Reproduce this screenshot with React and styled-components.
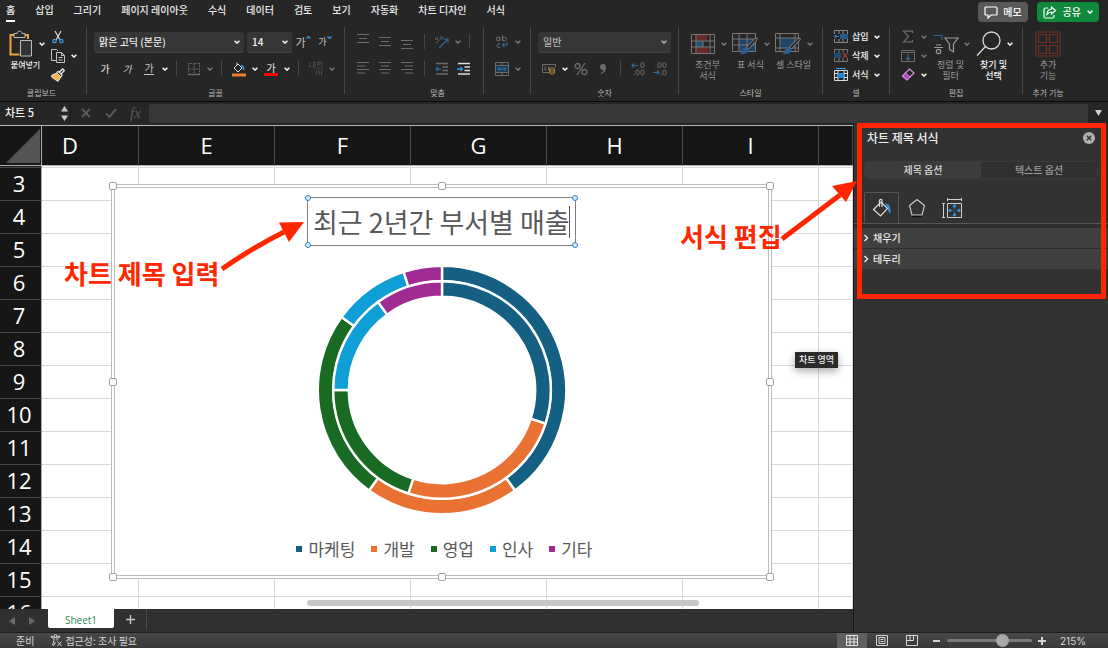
import React from 'react';
import styled, { createGlobalStyle } from 'styled-components';

const GlobalStyle = createGlobalStyle`
    * {
        box-sizing: border-box;
    }
    body {
        margin: 0;
        background: #262626;
        color: #e6e6e6;
        font-family: "Noto Sans CJK KR", "Noto Sans", sans-serif;
        font-size: 10px;
        line-height: 16px;
    }
    button, input, select {
        margin: 0;
        padding: 0;
        border: 0;
        background: none;
        color: inherit;
        font: inherit;
    }
    svg {
        display: block;
        flex: none;
    }
`;

const Page = styled.div`
    display: flex;
    flex-direction: column;
    height: 100vh;
    overflow: hidden;
`;

/* ---------- top tabs ---------- */

const TabBar = styled.header`
    display: flex;
    align-items: flex-start;
    justify-content: space-between;
    height: 27px;
    padding: 2px 9px 0 6px;
`;

const Tabs = styled.nav`
    display: flex;
    gap: 20px;
`;

const Tab = styled.a`
    height: 20px;
    color: #ececec;
    font-weight: 500;
    text-decoration: none;
    white-space: nowrap;
    border-bottom: 2px solid ${props => (props.$active ? '#fff' : 'transparent')};
`;

const TopActions = styled.div`
    display: flex;
    gap: 9px;
`;

const TopButton = styled.button`
    display: flex;
    align-items: center;
    gap: ${props => (props.$green ? 6 : 5)}px;
    height: 20px;
    padding: 0 6px;
    border-radius: 4px;
    color: #fff;
    font-weight: 500;
    background: ${props => (props.$green ? '#0f8a3c' : '#595959')};
`;

/* ---------- ribbon ---------- */

const RibbonBar = styled.div`
    display: flex;
    height: 75px;
    border-bottom: 1px solid #0c0c0c;
`;

const Divider = styled.div`
    flex: none;
    width: 1px;
    height: 67px;
    background: #474747;
`;

const Group = styled.section`
    display: flex;
    flex-direction: column;
    flex: none;
    padding: 0 7px;
    &:first-child {
        padding-left: 4px;
    }
`;

const GroupBody = styled.div`
    display: flex;
    align-items: flex-start;
    gap: ${props => props.$gap || 0}px;
    height: 58px;
`;

const GroupName = styled.div`
    color: #b8b8b8;
    font-size: 8px;
    text-align: center;
    white-space: nowrap;
`;

const Rows = styled.div`
    display: flex;
    flex-direction: column;
    padding-top: ${props => (props.$three ? 0 : 1)}px;
`;

const Row = styled.div`
    display: flex;
    align-items: center;
    height: ${props => (props.$low ? 19 : 27)}px;
`;

const SmallLine = styled.span`
    width: 1px;
    height: 15px;
    margin: 0 6px;
    background: #474747;
`;

const ToolButton = styled.button`
    display: flex;
    align-items: center;
    justify-content: center;
    width: 22px;
    height: 20px;
    color: ${props => (props.$dim ? '#6c6c6c' : '#c8c8c8')};
`;

const ArrowButton = styled.button`
    display: flex;
    align-items: center;
    justify-content: center;
    width: 10px;
    height: 20px;
    color: ${props => (props.$dim ? '#777' : '#f4f4f4')};
`;

const Glyph = styled.span`
    font-size: 10px;
    font-style: ${props => (props.$italic ? 'italic' : 'normal')};
    font-weight: ${props => (props.$strong ? 500 : 400)};
    line-height: 12px;
    border-bottom: ${props => (props.$under ? '1px solid currentColor' : '0')};
`;

const FontColor = styled.span`
    width: 14px;
    border-bottom: 3px solid #fe0000;
    font-weight: 500;
    line-height: 11px;
    text-align: center;
`;

const SizeGlyph = styled.span`
    display: flex;
    align-items: flex-start;
    font-size: ${props => (props.$big ? 11 : 9)}px;
    line-height: 14px;
`;

const Phonetic = styled.span`
    display: flex;
    flex-direction: column;
    align-items: flex-end;
    color: #555;
    font-size: 8px;
    line-height: 8px;
    white-space: nowrap;
`;

const LabelButton = styled.button`
    display: flex;
    align-items: center;
    width: 52px;
    height: 19px;
    color: #f0f0f0;
    font-size: 9px;
    font-weight: 500;
`;

const LabelIcon = styled.span`
    display: flex;
    justify-content: center;
    width: 22px;
`;

const LabelText = styled.span`
    width: 20px;
    text-align: left;
`;

const BigButton = styled.button`
    display: flex;
    flex-direction: column;
    align-items: center;
    gap: 2px;
    width: ${props => (props.$plain ? 36 : 43)}px;
    padding-top: 4px;
    color: ${props => (props.$dim ? '#9a9a9a' : '#f2f2f2')};
    font-size: ${props => (props.$small ? 8 : 9)}px;
    font-weight: ${props => (props.$dim ? 400 : 500)};
    line-height: 11px;
    white-space: nowrap;
`;

const BigIcon = styled.span`
    display: flex;
    align-items: center;
    height: 26px;
`;

const BigPicture = styled.span`
    display: flex;
    justify-content: center;
    width: 32px;
`;

const BigArrow = styled.span`
    display: flex;
    justify-content: center;
    width: 10px;
    color: ${props => (props.$dim ? '#777' : '#f4f4f4')};
`;

const BigLine = styled.span`
    display: block;
    height: 11px;
`;

const SelectBox = styled.label`
    position: relative;
    display: flex;
    width: ${props => props.$width};
    height: 20px;
    margin-right: ${props => props.$gap || 0}px;
    border-radius: 3px;
    background: #363636;
    box-shadow: 0 1px 0 #444;
    color: ${props => (props.$dim ? '#b4b4b4' : '#f0f0f0')};
    svg {
        position: absolute;
        right: 4px;
        top: 8px;
    }
`;

const Select = styled.select`
    width: 100%;
    padding: 0 14px 0 5px;
    appearance: none;
    outline: 0;
    font-weight: 500;
`;

/* ---------- formula bar ---------- */

const FormulaBar = styled.div`
    display: flex;
    align-items: center;
    height: 23px;
    padding-bottom: 1px;
    background: #262626;
`;

const NameBox = styled.input`
    width: 58px;
    padding: 0 0 2px 5px;
    outline: 0;
    color: #f0f0f0;
    font-size: 11px;
    font-weight: 500;
`;

const Stepper = styled.button`
    display: flex;
    justify-content: center;
    width: 12px;
`;

const FormulaTools = styled.div`
    display: flex;
    padding: 0 1px 0 2px;
    border-left: 1px solid #1a1a1a;
`;

const FormulaTool = styled.button`
    display: flex;
    align-items: center;
    justify-content: center;
    width: 25px;
    height: 18px;
    color: #5c5c5c;
    font-family: "Liberation Serif", serif;
    font-size: 15px;
    font-style: italic;
`;

const FormulaInput = styled.input`
    flex: 1;
    min-width: 0;
    height: 19px;
    background: #383838;
    border-radius: 3px 0 0 3px;
    outline: 0;
`;

const FormulaMore = styled.button`
    display: flex;
    justify-content: center;
    width: 20px;
`;

/* ---------- workspace ---------- */

const Workspace = styled.div`
    position: relative;
    display: flex;
    flex: 1;
    min-height: 0;
`;

const SheetColumn = styled.main`
    display: flex;
    flex: 1;
    flex-direction: column;
    min-width: 0;
`;

const Canvas = styled.div`
    position: relative;
    flex: 1;
    min-height: 0;
    overflow: hidden;
    border-top: 1px solid #b8b8b8;
    background: #fff;
`;

const Grid = styled.table`
    width: 100%;
    border-spacing: 0;
    table-layout: fixed;
    color: #fff;
    font-family: "Open Sans", "Noto Sans", sans-serif;
    font-size: 22px;
    line-height: 30px;
`;

const Corner = styled.th`
    width: 42px;
    height: 40px;
    padding: 0;
    border-right: 1px solid #b0b0b0;
    border-bottom: 1px solid #b0b0b0;
    background: #161616;
    svg {
        margin-left: 6px;
    }
`;

const ColumnHead = styled.th`
    width: ${props => props.$width || 'auto'};
    padding: 0 ${props => props.$cut || 0}px 2px 0;
    border-right: 1px solid #4a4a4a;
    border-bottom: 1px solid #b0b0b0;
    background: #161616;
    font-weight: 400;
`;

const RowHead = styled.th`
    height: ${props => (props.$sliver ? 2 : 33)}px;
    padding: 0 3px ${props => (props.$sliver ? 0 : 2)}px 0;
    border-right: 1px solid #b0b0b0;
    border-bottom: 1px solid #4a4a4a;
    background: #161616;
    font-weight: 400;
`;

const Cell = styled.td`
    padding: 0;
    border-right: 1px solid #d9d9d9;
    border-bottom: 1px solid #d9d9d9;
`;

const ScrollThumb = styled.div`
    position: absolute;
    left: 36%;
    bottom: 3px;
    width: 46%;
    height: 6px;
    border-radius: 3px;
    background: #c6c6c6;
`;

/* ---------- chart ---------- */

const ChartFrame = styled.section`
    position: absolute;
    left: 111px;
    top: 58px;
    display: flex;
    flex-direction: column;
    align-items: center;
    width: 661px;
    height: 395px;
    padding-top: 9px;
    border: 4px double #bcbcbc;
    background: #fff;
`;

const HandleLayer = styled.div`
    position: absolute;
    inset: -2px;
`;

const Handle = styled.span`
    position: absolute;
    left: ${props => props.$x};
    top: ${props => props.$y};
    width: 8px;
    height: 8px;
    margin: -4px;
    border: 1px solid #a0a0a0;
    border-radius: 2px;
    background: #fff;
`;

const TitleBox = styled.div`
    position: relative;
    display: flex;
    align-items: center;
    width: 269px;
    height: 49px;
    padding: 0 5px;
    border: 1px solid #808080;
`;

const TitleInput = styled.input`
    flex: 1;
    min-width: 0;
    outline: 0;
    color: #595959;
    font-size: 27px;
    line-height: 36px;
    text-align: center;
`;

const Caret = styled.span`
    width: 1px;
    height: 32px;
    background: #555;
`;

const TitleHandle = styled.span`
    position: absolute;
    left: ${props => props.$x};
    top: ${props => props.$y};
    width: 6px;
    height: 6px;
    margin: -3px;
    border: 1px solid #2f86d3;
    border-radius: 50%;
    background: #d6e9fa;
`;

const Donut = styled.svg`
    margin-top: 19px;
`;

const Legend = styled.ul`
    display: flex;
    gap: 16px;
    margin: 22px 0 0;
    padding: 0 0 0 6px;
    list-style: none;
    color: #595959;
    font-size: 17px;
    line-height: 24px;
`;

const LegendItem = styled.li`
    display: flex;
    align-items: center;
    gap: 6px;
    &::before {
        content: '';
        width: 6px;
        height: 6px;
        background: ${props => props.$color};
    }
`;

const Tooltip = styled.div`
    position: absolute;
    left: 795px;
    top: 226px;
    padding: 0 4px;
    background: #2b2b2b;
    box-shadow: 0 3px 8px rgba(0, 0, 0, 0.35);
    color: #f2f2f2;
    font-size: 9px;
    font-weight: 500;
`;

/* ---------- sheet tabs ---------- */

const SheetBar = styled.div`
    display: flex;
    align-items: flex-start;
    height: 23px;
    background: #303030;
`;

const SheetArrow = styled.button`
    display: flex;
    align-items: center;
    justify-content: center;
    width: 20px;
    height: 23px;
`;

const SheetArrows = styled.div`
    display: flex;
    width: 48px;
    padding-left: 2px;
`;

const SheetTab = styled.button`
    width: 66px;
    height: 19px;
    padding-top: 2px;
    border-radius: 0 0 2px 2px;
    background: #fff;
    color: #2e8b57;
    font-family: "Open Sans", sans-serif;
`;

const AddSheet = styled.button`
    display: flex;
    align-items: center;
    justify-content: center;
    width: 33px;
    height: 21px;
    border-right: 1px solid #4c4c4c;
`;

/* ---------- side panel ---------- */

const Panel = styled.aside`
    position: relative;
    flex: none;
    width: 255px;
    border-left: 1px solid #161616;
    background: #323232;
`;

const PanelHead = styled.div`
    display: flex;
    align-items: center;
    justify-content: space-between;
    height: 25px;
    padding: 0 13px;
`;

const PanelTitle = styled.h2`
    margin: 0;
    color: #efefef;
    font-size: 12px;
    font-weight: 500;
    line-height: 18px;
`;

const Segments = styled.div`
    display: flex;
    margin: 11px 10px 13px;
    border: 1px solid #3a3a3a;
    border-radius: 4px;
`;

const Segment = styled.button`
    flex: 1;
    height: 16px;
    background: ${props => (props.$active ? '#3c3c3c' : '#303030')};
    color: ${props => (props.$active ? '#dcdcdc' : '#9c9c9c')};
    font-weight: 500;
`;

const IconTabs = styled.div`
    display: flex;
    padding-left: 10px;
    border-bottom: 1px solid #565656;
`;

const IconTab = styled.button`
    display: flex;
    align-items: center;
    justify-content: center;
    width: 35px;
    height: 31px;
    border: 1px solid ${props => (props.$active ? '#565656' : 'transparent')};
    border-bottom: 0;
    border-radius: 2px 2px 0 0;
`;

const Sections = styled.div`
    display: grid;
    gap: 1px;
    padding-top: 4px;
    background: #2e2e2e;
`;

const SectionButton = styled.button`
    display: flex;
    align-items: center;
    gap: 3px;
    height: 20px;
    padding-left: 8px;
    background: #404040;
    color: #ececec;
    font-weight: 500;
`;

/* ---------- annotations ---------- */

const RedFrame = styled.div`
    position: absolute;
    left: 3px;
    right: 2px;
    top: -2px;
    height: 176px;
    border: 5px solid #ff2600;
`;

const Arrow = styled.svg`
    position: absolute;
    left: ${props => props.$left}px;
    top: ${props => props.$top}px;
`;

const Note = styled.p`
    position: absolute;
    left: ${props => props.$left}px;
    top: ${props => props.$top}px;
    margin: 0;
    color: #ff2600;
    font-size: 26px;
    font-weight: 700;
    line-height: 32px;
    white-space: nowrap;
`;

/* ---------- status bar ---------- */

const StatusBar = styled.footer`
    display: flex;
    align-items: center;
    flex: none;
    height: 16px;
    background: linear-gradient(#484848, #383838);
    border-top: 1px solid #1e1e1e;
    color: #d4d4d4;
`;

const StatusText = styled.span`
    display: flex;
    align-items: center;
    gap: 2px;
    padding-left: 16px;
`;

const Spacer = styled.span`
    flex: 1;
`;

const ViewButton = styled.button`
    display: flex;
    align-items: center;
    justify-content: center;
    width: 30px;
    height: 16px;
    background: ${props => (props.$active ? '#606060' : 'none')};
`;

const ZoomButton = styled.button`
    display: flex;
    justify-content: center;
    width: 20px;
`;

const ZoomSlider = styled.input`
    width: 85px;
    height: 14px;
    appearance: none;
    &::-webkit-slider-runnable-track {
        height: 3px;
        border-radius: 2px;
        background: #7a7a7a;
    }
    &::-webkit-slider-thumb {
        appearance: none;
        width: 13px;
        height: 13px;
        margin-top: -5px;
        border-radius: 50%;
        background: #a8a8a8;
    }
`;

const ZoomValue = styled.span`
    width: 56px;
    padding-left: 8px;
    font-family: Inter, sans-serif;
`;

/* ---------- icons ---------- */

const Svg = ({ w, h, children, ...rest }) => (
    <svg width={w} height={h} viewBox={`0 0 ${w} ${h}`} fill="none" stroke="currentColor" strokeWidth="1" aria-hidden="true" {...rest}>
        {children}
    </svg>
);

const Chevron = () => (
    <Svg w={6} h={4} strokeWidth="1.5"><path d="M.6.7 3 3.1 5.4.7" /></Svg>
);

const PasteIcon = () => (
    <Svg w={26} h={28}>
        <path d="M6 5H2.500v19.500h9M17 5h3v4" stroke="#f2a33a" strokeWidth="2" />
        <path d="M6 7.500v-4h3c0-3 5-3 5 0h3v4z" stroke="#bdbdbd" fill="#262626" />
        <path d="M12.500 10.500h11V26h-11z" stroke="#bdbdbd" fill="#333" />
    </Svg>
);

const CutIcon = () => (
    <Svg w={14} h={14}>
        <path d="M4 1l5 9M10 1 5 10" stroke="#dedede" strokeWidth="1.2" />
        <circle cx="3.600" cy="11" r="1.700" stroke="#3a9ce8" strokeWidth="1.200" />
        <circle cx="10.400" cy="11" r="1.700" stroke="#3a9ce8" strokeWidth="1.200" />
    </Svg>
);

const CopyIcon = () => (
    <Svg w={16} h={16} stroke="#c4c4c4">
        <path d="M6 12.500H1.500v-11h5L8 3" />
        <path d="M6.500 4.500h5l3 3v7h-8zM11.500 4.500v3h3M8.500 9.500h4M8.500 12h4" />
    </Svg>
);

const BrushIcon = () => (
    <Svg w={16} h={14}>
        <path d="M2 7l5-2 4 4-3 4.500L1.500 9z" fill="#f3b44a" stroke="#e9e2d2" />
        <path d="M6.500 4.500l2-1L12 7l-1.200 2M9.500 4l3-3 1.800 1.600-3 3.200" stroke="#eee" strokeWidth="1.300" />
    </Svg>
);

const BorderIcon = () => (
    <Svg w={14} h={14}>
        <path d="M1 1.500h12M1.500 1v11M12.500 1v11M7 2v10M2 7h10" strokeDasharray="1.500 1" />
        <path d="M1 12.500h12" strokeWidth="1.400" />
    </Svg>
);

const FillIcon = () => (
    <Svg w={16} h={16}>
        <path d="M3 7l4-4 4 4-4 4zM6 4V1.500" stroke="#d8d8d8" />
        <path d="M10 4.500c2 0 3 2 2.500 4.500" stroke="#3a9ce8" strokeWidth="1.600" />
        <path d="M1 14h14" stroke="#ed7d31" strokeWidth="3" />
    </Svg>
);

const PhoneticIcon = () => (
    <Svg w={8} h={7} stroke="#33536e"><path d="M1.500 1c0 3 0 4-1 5M4 1v5M6.500 1v5" /></Svg>
);

const lineSets = {
    left: 'M1 1.500h12M1 5h8M1 8.500h12M1 12h8',
    center: 'M1 1.500h12M3 5h8M1 8.500h12M3 12h8',
    right: 'M1 1.500h12M5 5h8M1 8.500h12M5 12h8',
    vtop: 'M1 .5h12M3 4.500h8M1 8.500h12',
    vmid: 'M1 3.500h12M3 7.500h8M1 11.500h12',
    vbot: 'M1 6.500h12M3 10.500h8M1 14.500h12',
};

const Lines = ({ kind }) => (
    <Svg w={14} h={15} strokeWidth="1.200"><path d={lineSets[kind]} /></Svg>
);

const OrientIcon = () => (
    <Svg w={16} h={14}>
        <path d="M1 5l3-3M1.500 2.500l3 3M5 5.500l3-3M6.500 1l3 3M2 8l2.500-2" />
        <path d="M5 13l8.500-8.500M9.500 4h4.500v4.500" stroke="#2f6896" strokeWidth="1.200" />
    </Svg>
);

const IndentIcon = ({ out, bright }) => (
    <Svg w={14} h={14} strokeWidth="1.300">
        <path d="M1 1.500h12M7.500 5h5.500M7.500 8.500h5.500M1 12h12" stroke={bright ? '#dcdcdc' : 'currentColor'} />
        <path d={out ? 'M1 7h5M3 5 1 7l2 2' : 'M0 7h5.500M3.500 5l2 2-2 2'} stroke={bright ? '#2f9bec' : '#2f6896'} />
    </Svg>
);

const WrapIcon = () => (
    <Svg w={14} h={14}>
        <circle cx="3" cy="4" r="1.800" /><path d="M4.800 2v4M7.500 0v6" /><circle cx="9.500" cy="4" r="1.800" />
        <path d="M5 9a2 2 0 1 0 0 3.500" />
        <path d="M12 7v3H7.500M9.500 8l-2 2 2 2" stroke="#2f6896" strokeWidth="1.200" />
    </Svg>
);

const MergeIcon = () => (
    <Svg w={14} h={14}>
        <path d="M.5.5h13v13H.5zM.5 3.500h13M.5 10.500h13M7 .5v3M7 10.500v3" />
        <path d="M1 4h12v6H1z" fill="#1d3c55" stroke="none" />
        <path d="M3 7h8M4.500 5.500 3 7l1.500 1.500M9.500 5.500 11 7 9.500 8.500" stroke="#3a7db1" />
    </Svg>
);

const MoneyIcon = () => (
    <Svg w={15} h={12}>
        <path d="M7 9.500H.5v-8h13v3M4.500 4H3v3h1.500M8 4H6.500v3" />
        <path d="M7.500 6c0-1.500 5-1.500 5 0v4c0 1.500-5 1.500-5 0zM7.500 6c0 1.500 5 1.500 5 0M7.500 8c0 1.500 5 1.500 5 0" stroke="#a58235" fill="#3a3222" />
    </Svg>
);

const PercentIcon = () => (
    <Svg w={14} h={14} strokeWidth="1.300">
        <circle cx="3.500" cy="4" r="2.500" /><circle cx="10.500" cy="10" r="2.500" /><path d="M11 1 3 13" />
    </Svg>
);

const CommaIcon = () => (
    <Svg w={8} h={12} stroke="none">
        <circle cx="4" cy="4" r="3" fill="currentColor" /><path d="M7 4c0 4-2 6-5 7l-.5-1C4 9 5 7.500 5 5z" fill="currentColor" />
    </Svg>
);

const DecimalIcon = ({ less }) => (
    <Svg w={14} h={14}>
        <path d={less ? 'M0 10.500h6M4 8.500l2 2-2 2' : 'M7 3.500H1M3 1.500l-2 2 2 2'} stroke="#2f6896" strokeWidth="1.200" />
        <rect x="10" y=".5" width="3" height="5" rx="1.500" />
        <rect x="10" y="8" width="3" height="5" rx="1.500" />
        <rect x="5" y={less ? .5 : 8} width="3" height="5" rx="1.500" />
        <path d={less ? 'M2.500 5h1M7.500 12.500h1' : 'M2.500 12.500h1'} />
    </Svg>
);

const ConditionalIcon = () => (
    <Svg w={24} h={20} stroke="#777">
        <path d="M5 .5h11v6H5zM5 13h12v6.500H5z" fill="#6e2a2a" stroke="none" />
        <path d="M5 7h7v6H5z" fill="#22507a" stroke="none" />
        <path d="M.5.5h23v19H.5zM.5 7h23M.5 13h23M5 .5v19M19 .5v19M12 7v6" />
    </Svg>
);

const Brush = () => (
    <>
        <path d="M25 8 16.500 17l-2 -2L23 6.500c1.500-1 3 0 2 1.500z" fill="#262626" stroke="#8a8a8a" />
        <path d="M14 15.500c2 0 3 2 2 4-1.500 3-6 3-9 2.500 2-.5 2.500-2 3-3.500.5-2 2-3 4-3z" fill="#2a5f8c" stroke="none" />
    </>
);

const TableStyleIcon = () => (
    <Svg w={27} h={24} stroke="#777">
        <path d="M7 7h17v13H7z" fill="#1f4669" stroke="none" />
        <path d="M.5 1.500h23v18H.5zM.5 7h23M.5 13h23M7 1.500v18M15 1.500v18" />
        <Brush />
    </Svg>
);

const CellStyleIcon = () => (
    <Svg w={27} h={24} stroke="#777">
        <path d="M5 6h15v10H5z" fill="#1f4669" stroke="none" />
        <path d="M.5 1.500h23v18H.5zM.5 6h23M.5 16h23M5 1.500v18M20 1.500v18" />
        <Brush />
    </Svg>
);

const InsertCellIcon = () => (
    <Svg w={14} h={13} stroke="#888">
        <path d="M.5 4V.5h13V4M.5 9v3.500h13V9M5 .5V4M9 .5V4M5 9v3.500M9 9v3.500" />
        <path d="M6 4h8v5H6z" fill="#235e90" stroke="none" /><path d="M0 6.500h5M2.500 4.500l-2 2 2 2" stroke="#3b82ba" />
    </Svg>
);

const DeleteCellIcon = () => (
    <Svg w={14} h={13} stroke="#777">
        <path d="M.5 4V.5h13V4M.5 9v3.500h13V9M5 .5V4M9 .5V4M5 9v3.500M9 9v3.500" />
        <path d="M0 4h7v5H0z" fill="#1f4c74" stroke="none" /><path d="M9 4.500l4 4M13 4.500l-4 4" stroke="#a33b3b" strokeWidth="1.200" />
    </Svg>
);

const FormatCellIcon = () => (
    <Svg w={14} h={13} stroke="#dadada">
        <path d="M.5 2.500h13v10H.5zM.5 5.500h13M.5 9.500h13M4 2.500v10M10 2.500v10" />
        <path d="M4 5h6v5H4z" fill="#1f8be0" stroke="none" /><path d="M2 .5h10" stroke="#2f9bec" />
    </Svg>
);

const SumIcon = () => (
    <Svg w={12} h={13} strokeWidth="1.200"><path d="M10.500 3V1.200H1.500L6.500 6.500l-5 5.300h9V10" /></Svg>
);

const FillDownIcon = () => (
    <Svg w={14} h={12}>
        <path d="M.5.5h13v11H.5zM.5 2.500h13" /><path d="M7 4v6M5 8l2 2 2-2" stroke="#2f6896" strokeWidth="1.200" />
    </Svg>
);

const EraserIcon = () => (
    <Svg w={14} h={13}>
        <path d="M8.500 1 13 5l-7 7-4.500-4z" stroke="#d995dc" strokeWidth="1.200" /><path d="M4.500 5 9 9l-3 3-4.500-4z" fill="#b146b8" stroke="#d995dc" />
    </Svg>
);

const SortIcon = () => (
    <Svg w={26} h={22} strokeWidth="1.200">
        <path d="M1 2.500h8v4.500" stroke="#2f6896" />
        <path d="M3 12h5M1 14.500h9" /><circle cx="5.500" cy="18.500" r="2.200" />
        <path d="M12 5h13l-4.500 6v8l-4-2.500V11z" />
    </Svg>
);

const FindIcon = () => (
    <Svg w={26} h={26} stroke="#dcdcdc" strokeWidth="1.300"><circle cx="15.500" cy="9.500" r="8.500" /><path d="M9.500 15.500 1 24.500" /></Svg>
);

const AddInIcon = () => (
    <Svg w={26} h={26} stroke="#6e3023" strokeWidth="1.200">
        <path d="M1 1h24v24H1z" /><path d="M3.500 3.500h8v8h-8zM14.500 3.500h8v8h-8zM3.500 14.500h8v8h-8zM14.500 14.500h8v8h-8z" />
    </Svg>
);

const MemoIcon = () => (
    <Svg w={14} h={13} strokeWidth="1.200"><path d="M2 1h10q1 0 1 1v6q0 1-1 1H7l-3 3V9H2Q1 9 1 8V2q0-1 1-1z" /></Svg>
);

const ShareIcon = () => (
    <Svg w={14} h={13} strokeWidth="1.200">
        <path d="M5 2H2.500Q1 2 1 3.500v7Q1 12 2.500 12h7q1.500 0 1.500-1.500V9" /><path d="M8.500 1l4 3.500-4 3.500V6C6 6 5 7 4 8.500 4 5 6 3.200 8.500 3z" />
    </Svg>
);

const AccessIcon = () => (
    <Svg w={13} h={13}>
        <circle cx="5.500" cy="2" r="1.400" /><path d="M1 3l3 1.500v2L2.500 11l1.200.5L5.500 8M10 3 7 4.500v2M7.500 7.500l4 4.500M11.500 7.500l-4 4.500M1 3l.5-1 3 1.500h2l3-1.500.5 1" />
    </Svg>
);

/* ---------- chart drawing ---------- */

const series = [
    { name: '마케팅', color: '#156082', inner: 30, outer: 40 },
    { name: '개발', color: '#e97132', inner: 25, outer: 20 },
    { name: '영업', color: '#196b24', inner: 20, outer: 25 },
    { name: '인사', color: '#0f9ed5', inner: 15, outer: 10 },
    { name: '기타', color: '#a02b93', inner: 10, outer: 5 },
];

const point = (r, share) => {
    const a = (share / 100) * Math.PI * 2;
    return `${(125 + r * Math.sin(a)).toFixed(2)} ${(125 - r * Math.cos(a)).toFixed(2)}`;
};

const Ring = ({ field, from, to }) => {
    let start = 0;
    return series.map(item => {
        const end = start + item[field];
        const d = `M${point(to, start)}A${to} ${to} 0 0 1 ${point(to, end)}L${point(from, end)}A${from} ${from} 0 0 0 ${point(from, start)}z`;
        start = end;
        return <path key={item.name} d={d} fill={item.color} stroke="#fff" strokeWidth="2.400" />;
    });
};

/* ---------- parts ---------- */

const Drop = ({ dim }) => (
    <ArrowButton $dim={dim} aria-label="더 보기"><Chevron /></ArrowButton>
);

const Big = ({ icon, lines, dim, plain, small }) => (
    <BigButton $dim={dim} $plain={plain} $small={small}>
        <BigIcon>
            <BigPicture>{icon}</BigPicture>
            {!plain && <BigArrow $dim={dim}><Chevron /></BigArrow>}
        </BigIcon>
        <span>{lines.map(line => <BigLine key={line}>{line}</BigLine>)}</span>
    </BigButton>
);

const CellTool = ({ icon, text }) => (
    <LabelButton>
        <LabelIcon>{icon}</LabelIcon>
        <LabelText>{text}</LabelText>
        <BigArrow><Chevron /></BigArrow>
    </LabelButton>
);

const tabs = ['홈', '삽입', '그리기', '페이지 레이아웃', '수식', '데이터', '검토', '보기', '자동화', '차트 디자인', '서식'];

const Ribbon = () => (
    <RibbonBar>
        <Group>
            <GroupBody>
                <Big small icon={<PasteIcon />} lines={['붙여넣기']} />
                <Rows $three>
                    <Row $low><ToolButton aria-label="잘라내기"><CutIcon /></ToolButton></Row>
                    <Row $low><ToolButton aria-label="복사"><CopyIcon /></ToolButton><Drop /></Row>
                    <Row $low><ToolButton aria-label="서식 복사"><BrushIcon /></ToolButton></Row>
                </Rows>
            </GroupBody>
            <GroupName>클립보드</GroupName>
        </Group>
        <Divider />
        <Group>
            <GroupBody>
                <Rows>
                    <Row>
                        <SelectBox $width="150px" $gap={3}>
                            <Select aria-label="글꼴"><option>맑은 고딕 (본문)</option></Select>
                            <Chevron />
                        </SelectBox>
                        <SelectBox $width="45px">
                            <Select aria-label="글꼴 크기"><option>14</option></Select>
                            <Chevron />
                        </SelectBox>
                        <ToolButton aria-label="글꼴 크게">
                            <SizeGlyph $big>가<Svg w={5} h={5} stroke="#3a9ce8" strokeWidth="1.200"><path d="M.5 3.500l2-2 2 2" /></Svg></SizeGlyph>
                        </ToolButton>
                        <ToolButton aria-label="글꼴 작게">
                            <SizeGlyph>가<Svg w={5} h={5} stroke="#3a9ce8" strokeWidth="1.200"><path d="M.5 1.500l2 2 2-2" /></Svg></SizeGlyph>
                        </ToolButton>
                    </Row>
                    <Row>
                        <ToolButton><Glyph $strong>가</Glyph></ToolButton>
                        <ToolButton><Glyph $italic>가</Glyph></ToolButton>
                        <ToolButton><Glyph $under>가</Glyph></ToolButton>
                        <Drop />
                        <SmallLine />
                        <ToolButton $dim aria-label="테두리"><BorderIcon /></ToolButton>
                        <Drop dim />
                        <SmallLine />
                        <ToolButton aria-label="채우기 색"><FillIcon /></ToolButton>
                        <Drop />
                        <ToolButton><FontColor>가</FontColor></ToolButton>
                        <Drop />
                        <SmallLine />
                        <ToolButton $dim><Phonetic>내천<PhoneticIcon /></Phonetic></ToolButton>
                        <Drop dim />
                    </Row>
                </Rows>
            </GroupBody>
            <GroupName>글꼴</GroupName>
        </Group>
        <Divider />
        <Group>
            <GroupBody $gap={7}>
                <Rows>
                    <Row>
                        <ToolButton $dim aria-label="위쪽 맞춤"><Lines kind="vtop" /></ToolButton>
                        <ToolButton $dim aria-label="가운데 맞춤"><Lines kind="vmid" /></ToolButton>
                        <ToolButton $dim aria-label="아래쪽 맞춤"><Lines kind="vbot" /></ToolButton>
                        <SmallLine />
                        <ToolButton $dim aria-label="방향"><OrientIcon /></ToolButton>
                        <Drop dim />
                        <SmallLine />
                    </Row>
                    <Row>
                        <ToolButton $dim aria-label="왼쪽 맞춤"><Lines kind="left" /></ToolButton>
                        <ToolButton $dim aria-label="가로 가운데 맞춤"><Lines kind="center" /></ToolButton>
                        <ToolButton $dim aria-label="오른쪽 맞춤"><Lines kind="right" /></ToolButton>
                        <SmallLine />
                        <ToolButton $dim aria-label="내어쓰기"><IndentIcon out /></ToolButton>
                        <ToolButton aria-label="들여쓰기"><IndentIcon bright /></ToolButton>
                    </Row>
                </Rows>
                <Divider />
                <Rows>
                    <Row><ToolButton $dim aria-label="텍스트 줄 바꿈"><WrapIcon /></ToolButton><Drop dim /></Row>
                    <Row><ToolButton $dim aria-label="병합"><MergeIcon /></ToolButton><Drop dim /></Row>
                </Rows>
            </GroupBody>
            <GroupName>맞춤</GroupName>
        </Group>
        <Divider />
        <Group>
            <GroupBody>
                <Rows>
                    <Row>
                        <SelectBox $width="100%" $dim>
                            <Select aria-label="표시 형식"><option>일반</option></Select>
                            <Chevron />
                        </SelectBox>
                    </Row>
                    <Row>
                        <ToolButton $dim aria-label="회계 형식"><MoneyIcon /></ToolButton>
                        <Drop />
                        <ToolButton $dim aria-label="백분율"><PercentIcon /></ToolButton>
                        <ToolButton $dim aria-label="쉼표"><CommaIcon /></ToolButton>
                        <SmallLine />
                        <ToolButton $dim aria-label="자릿수 늘림"><DecimalIcon /></ToolButton>
                        <ToolButton $dim aria-label="자릿수 줄임"><DecimalIcon less /></ToolButton>
                    </Row>
                </Rows>
            </GroupBody>
            <GroupName>숫자</GroupName>
        </Group>
        <Divider />
        <Group>
            <GroupBody>
                <Big dim icon={<ConditionalIcon />} lines={['조건부', '서식']} />
                <Big dim icon={<TableStyleIcon />} lines={['표 서식']} />
                <Big dim icon={<CellStyleIcon />} lines={['셀 스타일']} />
            </GroupBody>
            <GroupName>스타일</GroupName>
        </Group>
        <Divider />
        <Group>
            <GroupBody>
                <Rows $three>
                    <CellTool icon={<InsertCellIcon />} text="삽입" />
                    <CellTool icon={<DeleteCellIcon />} text="삭제" />
                    <CellTool icon={<FormatCellIcon />} text="서식" />
                </Rows>
            </GroupBody>
            <GroupName>셀</GroupName>
        </Group>
        <Divider />
        <Group>
            <GroupBody>
                <Rows $three>
                    <Row $low><ToolButton $dim aria-label="합계"><SumIcon /></ToolButton><Drop dim /></Row>
                    <Row $low><ToolButton $dim aria-label="채우기"><FillDownIcon /></ToolButton><Drop dim /></Row>
                    <Row $low><ToolButton aria-label="지우기"><EraserIcon /></ToolButton><Drop /></Row>
                </Rows>
                <Big dim icon={<SortIcon />} lines={['정렬 및', '필터']} />
                <Big icon={<FindIcon />} lines={['찾기 및', '선택']} />
            </GroupBody>
            <GroupName>편집</GroupName>
        </Group>
        <Divider />
        <Group>
            <GroupBody>
                <Big dim plain icon={<AddInIcon />} lines={['추가', '기능']} />
            </GroupBody>
            <GroupName>추가 기능</GroupName>
        </Group>
    </RibbonBar>
);

const Formula = () => (
    <FormulaBar>
        <NameBox aria-label="이름 상자" defaultValue="차트 5" />
        <Stepper aria-label="이름 목록">
            <Svg w={7} h={15} stroke="none"><path d="M3.500 0 7 5.500H0zM3.500 15 0 9.500h7z" fill="#c8c8c8" /></Svg>
        </Stepper>
        <FormulaTools>
            <FormulaTool aria-label="취소"><Svg w={10} h={10} strokeWidth="1.800"><path d="M1 1l8 8M9 1 1 9" /></Svg></FormulaTool>
            <FormulaTool aria-label="입력"><Svg w={12} h={10} strokeWidth="2"><path d="M1 5.500 4.500 9 11 1" /></Svg></FormulaTool>
            <FormulaTool>fx</FormulaTool>
        </FormulaTools>
        <FormulaInput aria-label="수식" />
        <FormulaMore aria-label="수식 입력줄 확장">
            <Svg w={7} h={6} stroke="none"><path d="M0 0h7L3.500 6z" fill="#d0d0d0" /></Svg>
        </FormulaMore>
    </FormulaBar>
);

const columns = ['E', 'F', 'G', 'H', 'I'];
const rows = [3, 4, 5, 6, 7, 8, 9, 10, 11, 12, 13, 14, 15, 16];
const blanks = ['D', ...columns, 'J'];

const Sheet = () => (
    <Grid>
        <thead>
            <tr>
                <Corner><Svg w={34} h={34} stroke="none"><path d="M34 0v34H0z" fill="#555" /></Svg></Corner>
                <ColumnHead $width="97px" $cut={40}>D</ColumnHead>
                {columns.map(name => <ColumnHead key={name} $width="136px">{name}</ColumnHead>)}
                <ColumnHead />
            </tr>
        </thead>
        <tbody>
            <tr>
                <RowHead $sliver />
                {blanks.map(name => <Cell key={name} />)}
            </tr>
            {rows.map(row => (
                <tr key={row}>
                    <RowHead>{row}</RowHead>
                    {blanks.map(name => <Cell key={name} />)}
                </tr>
            ))}
        </tbody>
    </Grid>
);

const frameHandles = [
    ['0%', '0%'], ['50%', '0%'], ['100%', '0%'], ['0%', '50%'],
    ['100%', '50%'], ['0%', '100%'], ['50%', '100%'], ['100%', '100%'],
];
const titleHandles = [['0%', '0%'], ['100%', '0%'], ['0%', '100%'], ['100%', '100%']];

const Chart = () => (
    <ChartFrame>
        <HandleLayer>
            {frameHandles.map(([x, y]) => <Handle key={x + y} $x={x} $y={y} />)}
        </HandleLayer>
        <TitleBox>
            <TitleInput aria-label="차트 제목" defaultValue="최근 2년간 부서별 매출" />
            <Caret />
            {titleHandles.map(([x, y]) => <TitleHandle key={x + y} $x={x} $y={y} />)}
        </TitleBox>
        <Donut width="250" height="250" viewBox="0 0 250 250">
            <Ring field="outer" from={108.8} to={124.2} />
            <Ring field="inner" from={93.2} to={108.8} />
        </Donut>
        <Legend>
            {series.map(item => <LegendItem key={item.name} $color={item.color}>{item.name}</LegendItem>)}
        </Legend>
    </ChartFrame>
);

const FormatPanel = () => (
    <Panel>
        <PanelHead>
            <PanelTitle>차트 제목 서식</PanelTitle>
            <button aria-label="닫기">
                <Svg w={12} h={12}><circle cx="6" cy="6" r="6" fill="#b0b0b0" stroke="none" /><path d="M3.800 3.800l4.400 4.400M8.200 3.800 3.800 8.200" stroke="#323232" strokeWidth="1.400" /></Svg>
            </button>
        </PanelHead>
        <Segments>
            <Segment $active>제목 옵션</Segment>
            <Segment>텍스트 옵션</Segment>
        </Segments>
        <IconTabs>
            <IconTab $active aria-label="채우기 및 선">
                <Svg w={20} h={20} stroke="#dcdcdc" strokeWidth="1.200">
                    <path d="M1.500 11.500 9 4l6.500 6.500L8.500 18z" /><path d="M7.500 9V2.500c0-1.500 2.500-1.500 2.500 0V9" />
                    <path d="M13 5.500c4-.5 6 3 5.500 10.500-1.500-1-2.500-3-2.500-5z" fill="#2f8fe0" stroke="none" />
                </Svg>
            </IconTab>
            <IconTab aria-label="효과">
                <Svg w={18} h={20} stroke="#cfcfcf" strokeWidth="1.100"><path d="M9 1.500 16.500 7.500 14 17H4L1.500 7.500z" /><path d="M4 18.500h10" stroke="#111" strokeWidth="1.500" /></Svg>
            </IconTab>
            <IconTab aria-label="크기 및 속성">
                <Svg w={20} h={20} stroke="#cfcfcf">
                    <path d="M5.500 5.500h14v14h-14zM5.500 1.500h14M5.500 0v3M19.500 0v3M1.500 5.500v14M0 5.500h3M0 19.500h3" />
                    <path d="M12.500 7v3.500M12.500 14.500V18M7 12.500h3.500M14.500 12.500H18M11 8.500 12.500 7 14 8.500M11 16.500l1.500 1.500 1.500-1.500M8.500 11 7 12.500 8.500 14M16.500 11l1.500 1.500-1.500 1.500" stroke="#2f9bec" strokeWidth="1.200" />
                </Svg>
            </IconTab>
        </IconTabs>
        <Sections>
            {['채우기', '테두리'].map(name => (
                <SectionButton key={name}>
                    <Svg w={8} h={8} strokeWidth="1.400"><path d="M2.500 1l3 3-3 3" /></Svg>
                    {name}
                </SectionButton>
            ))}
        </Sections>
        <RedFrame />
    </Panel>
);

const Status = () => (
    <StatusBar>
        <StatusText>준비</StatusText>
        <StatusText><AccessIcon />접근성: 조사 필요</StatusText>
        <Spacer />
        <ViewButton $active aria-label="기본">
            <Svg w={12} h={11} stroke="#e8e8e8"><path d="M.5.5h11v10H.5zM.5 4h11M.5 7h11M4 .5v10M8 .5v10" /></Svg>
        </ViewButton>
        <ViewButton aria-label="페이지 레이아웃">
            <Svg w={12} h={11} stroke="#d8d8d8"><path d="M.5.5h11v10H.5zM3 2.500h6v6H3zM4.500 4.500h3M4.500 6.500h3" /></Svg>
        </ViewButton>
        <ViewButton aria-label="페이지 나누기">
            <Svg w={12} h={11} stroke="#d8d8d8"><path d="M.5.5h11v10H.5zM4 .5v5M7.5.5v5M1 5.500h6.500" /></Svg>
        </ViewButton>
        <ZoomButton aria-label="축소"><Svg w={8} h={8} strokeWidth="2"><path d="M0 4h7" /></Svg></ZoomButton>
        <ZoomSlider type="range" aria-label="확대/축소" min="0" max="100" defaultValue="68" />
        <ZoomButton aria-label="확대"><Svg w={8} h={8} strokeWidth="2"><path d="M0 4h8M4 0v8" /></Svg></ZoomButton>
        <ZoomValue>215%</ZoomValue>
    </StatusBar>
);

const App = () => (
    <Page>
        <GlobalStyle />
        <TabBar>
            <Tabs>
                {tabs.map((name, i) => <Tab key={name} href="#" $active={i === 0}>{name}</Tab>)}
            </Tabs>
            <TopActions>
                <TopButton><MemoIcon />메모</TopButton>
                <TopButton $green><ShareIcon />공유<Chevron /></TopButton>
            </TopActions>
        </TabBar>
        <Ribbon />
        <Formula />
        <Workspace>
            <SheetColumn>
                <Canvas>
                    <Sheet />
                    <Chart />
                    <ScrollThumb />
                    <Tooltip role="tooltip">차트 영역</Tooltip>
                </Canvas>
                <SheetBar>
                    <SheetArrows>
                        <SheetArrow aria-label="이전 시트"><Svg w={6} h={8} stroke="none"><path d="M6 0v8L0 4z" fill="#6a6a6a" /></Svg></SheetArrow>
                        <SheetArrow aria-label="다음 시트"><Svg w={6} h={8} stroke="none"><path d="M0 0v8l6-4z" fill="#6a6a6a" /></Svg></SheetArrow>
                    </SheetArrows>
                    <SheetTab>Sheet1</SheetTab>
                    <AddSheet aria-label="새 시트"><Svg w={9} h={9} stroke="#c4c4c4" strokeWidth="1.400"><path d="M0 4.500h9M4.500 0v9" /></Svg></AddSheet>
                </SheetBar>
            </SheetColumn>
            <FormatPanel />
            <Note $left={64} $top={132}>차트 제목 입력</Note>
            <Arrow $left={218} $top={92} width="90" height="60">
                <path d="M4 52Q34 31 66 15" fill="none" stroke="#ff2600" strokeWidth="5" />
                <path d="M61 5.500 86 5 71 25z" fill="#ff2600" />
            </Arrow>
            <Note $left={680} $top={95}>서식 편집</Note>
            <Arrow $left={778} $top={50} width="84" height="70">
                <path d="M4 64 62 20" fill="none" stroke="#ff2600" strokeWidth="5" />
                <path d="M54 11 79 6 68 27z" fill="#ff2600" />
            </Arrow>
        </Workspace>
        <Status />
    </Page>
);

export default App;
